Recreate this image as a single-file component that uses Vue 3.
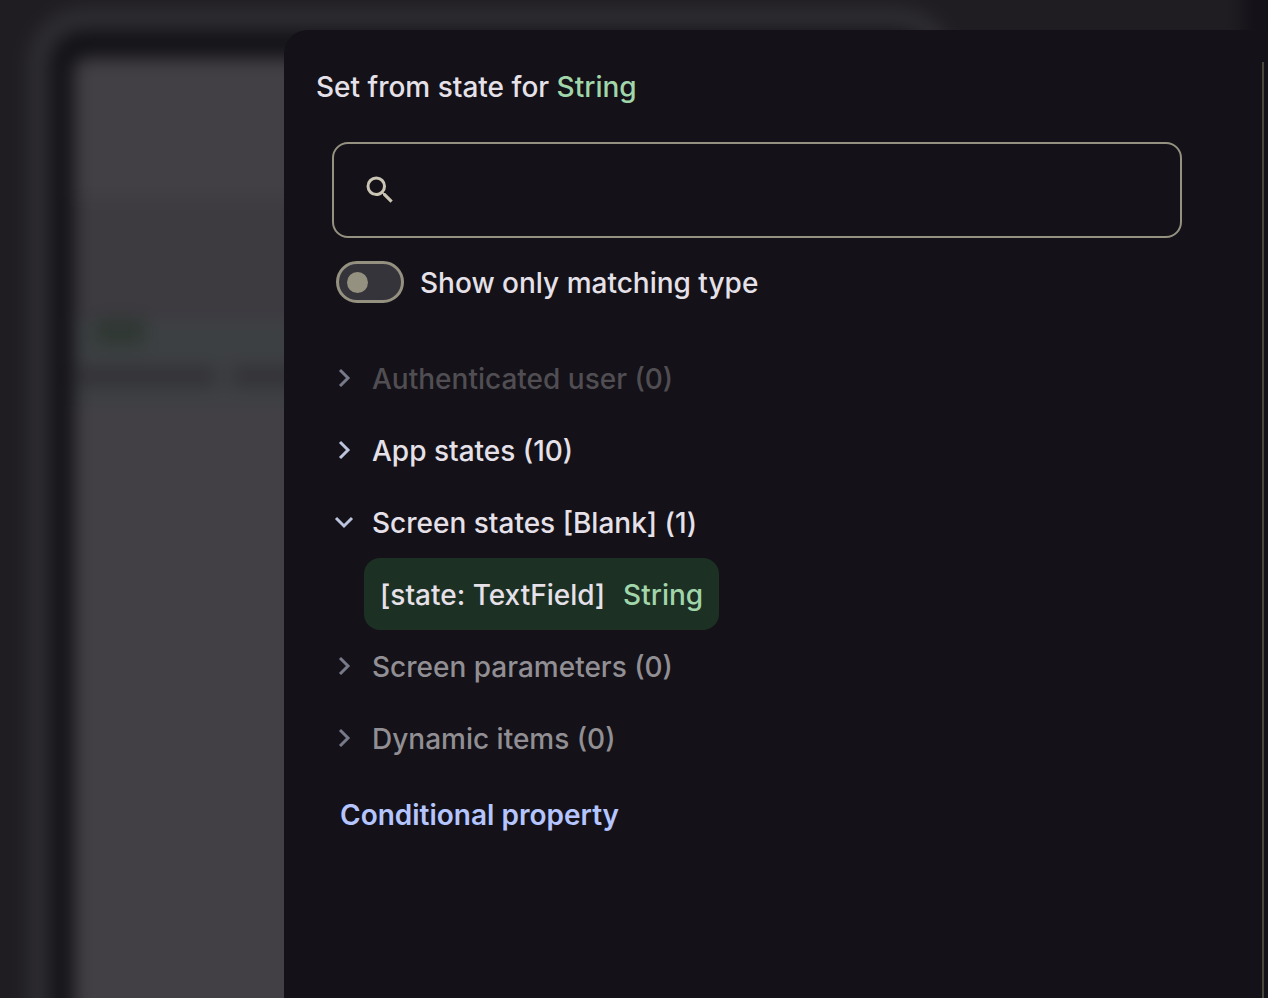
<script setup>
import { ref } from 'vue'

const query = ref('')
const matchingOnly = ref(false)

const groups = ref([
  { name: 'Authenticated user', count: 0, tone: 'faint', open: false, items: [] },
  { name: 'App states', count: 10, tone: 'normal', open: false, items: [] },
  {
    name: 'Screen states [Blank]',
    count: 1,
    tone: 'normal',
    open: true,
    items: [{ name: '[state: TextField]', type: 'String' }],
  },
  { name: 'Screen parameters', count: 0, tone: 'muted', open: false, items: [] },
  { name: 'Dynamic items', count: 0, tone: 'muted', open: false, items: [] },
])
</script>

<template>
  <div class="page">
    <div class="backdrop" aria-hidden="true">
      <div class="canvas">
        <div class="device">
          <div class="screen">
            <div class="hero"></div>
            <div class="header"></div>
            <div class="field">
              <div class="label"></div>
              <div class="words">
                <div class="word"></div>
                <div class="word"></div>
              </div>
            </div>
          </div>
        </div>
      </div>
      <div class="side"></div>
    </div>

    <main class="dialog">
      <h1 class="title">Set from state for <span class="type">String</span></h1>

      <div class="body">
        <label class="search">
          <svg class="search-icon" viewBox="0 0 24 24" aria-hidden="true">
            <path d="M15.5 14h-.79l-.28-.27A6.47 6.47 0 0 0 16 9.5 6.5 6.5 0 1 0 9.5 16c1.61 0 3.09-.59 4.23-1.57l.27.28v.79l5 4.99L20.49 19l-4.99-5zm-6 0a4.5 4.5 0 1 1 0-9 4.5 4.5 0 0 1 0 9z" />
          </svg>
          <input v-model="query" class="search-input" type="text" aria-label="Search states" />
        </label>

        <label class="match">
          <input v-model="matchingOnly" class="switch" type="checkbox" role="switch" />
          <span class="name">Show only matching type</span>
        </label>

        <ul class="groups">
          <li v-for="group in groups" :key="group.name">
            <button
              class="group"
              :class="group.tone"
              type="button"
              :aria-expanded="group.open"
              @click="group.open = !group.open"
            >
              <svg class="chevron" :class="{ open: group.open }" viewBox="0 0 24 24" aria-hidden="true">
                <path d="M8 4l8 8-8 8" />
              </svg>
              <span class="name">{{ group.name }} ({{ group.count }})</span>
            </button>
            <template v-if="group.open">
              <button v-for="item in group.items" :key="item.name" class="item" type="button">
                <span class="name">{{ item.name }}</span>
                <span class="name type">{{ item.type }}</span>
              </button>
            </template>
          </li>
        </ul>

        <button class="conditional" type="button">Conditional property</button>
      </div>
    </main>

    <aside class="rail" aria-hidden="true"></aside>
  </div>
</template>

<style>
body {
  background: #141218;
}
</style>

<style scoped>
.page {
  display: grid;
  grid-template-columns: 284px minmax(0, 1fr) 6px;
  min-height: 100vh;
  overflow: hidden;
  background: #141218;
  color: #e6e1e9;
  font-family: Inter, Roboto, sans-serif;
  font-size: 28px;
  font-weight: 500;
  line-height: 40px;
}

.backdrop {
  grid-area: 1 / 1 / 2 / 4;
  display: flex;
  margin: -40px 0 -40px -40px;
  filter: blur(9px);
}

.canvas {
  flex: 1;
  box-sizing: border-box;
  padding: 48px 288px 0 68px;
  background: #1f1d21;
}

.side {
  width: 26px;
  background: #141218;
}

.device {
  box-sizing: border-box;
  height: 100%;
  padding: 28px 24px 0;
  border: 22px solid #2e2d32;
  border-bottom: 0;
  border-radius: 56px 56px 0 0;
  background: #131217;
}

.screen {
  height: 100%;
  overflow: hidden;
  border-radius: 12px 12px 0 0;
  background: #434045;
}

.hero {
  height: 140px;
}

.header {
  height: 120px;
  background: #3d3a40;
}

.field {
  box-sizing: border-box;
  height: 88px;
  padding: 0 20px;
  background: #3d4043;
}

.label {
  width: 52px;
  height: 28px;
  background: #2f3833;
}

.words {
  display: flex;
  gap: 16px;
  margin-top: 20px;
  margin-left: -16px;
}

.word {
  width: 138px;
  height: 20px;
  background: #333237;
}

.dialog {
  grid-area: 1 / 2 / 2 / 4;
  z-index: 1;
  margin-top: 30px;
  padding: 32px 38px 32px 32px;
  border-radius: 24px 0 0 0;
  background: #141218;
}

.rail {
  grid-area: 1 / 3 / 2 / 4;
  z-index: 2;
  margin-top: 62px;
  border-left: 2px solid #48473a;
}

.title {
  margin: 0;
  padding: 5px 0 7px;
  font-size: 28px;
  font-weight: 500;
  line-height: 40px;
}

.type {
  color: #a1d6aa;
}

.body {
  padding: 28px 48px 0 16px;
}

.search {
  display: flex;
  align-items: center;
  gap: 16px;
  box-sizing: border-box;
  height: 96px;
  padding: 0 28px;
  border: 2px solid #949180;
  border-radius: 16px;
}

.search-icon {
  flex: none;
  width: 36px;
  height: 36px;
  fill: #cbc5b5;
}

.search-input {
  flex: 1;
  min-width: 0;
  padding: 0;
  border: 0;
  outline: 0;
  background: transparent;
  color: inherit;
  font: inherit;
}

.match {
  display: flex;
  align-items: center;
  gap: 16px;
  height: 48px;
  margin-top: 20px;
  padding: 0 4px;
}

.switch {
  display: flex;
  align-items: center;
  flex: none;
  appearance: none;
  box-sizing: border-box;
  width: 68px;
  height: 42px;
  margin: 0;
  padding: 0 8px;
  border: 3px solid #949180;
  border-radius: 21px;
  background: #36343b;
}

.switch::before {
  content: '';
  width: 21px;
  height: 21px;
  border-radius: 50%;
  background: #949180;
}

.switch:checked {
  justify-content: flex-end;
}

.groups {
  margin: 36px 0 0;
  padding: 0;
  list-style: none;
}

.group,
.item,
.conditional {
  display: flex;
  align-items: center;
  margin: 0;
  border: 0;
  background: none;
  color: inherit;
  font: inherit;
  text-align: left;
  cursor: pointer;
}

.name {
  padding-top: 2px;
}

.group {
  gap: 16px;
  width: 100%;
  height: 72px;
  padding: 0;
}

.chevron {
  flex: none;
  width: 24px;
  height: 24px;
  fill: none;
  stroke: #bcc3dc;
  stroke-width: 3;
}

.chevron.open {
  transform: rotate(90deg);
}

.muted .name {
  color: #918f94;
}

.faint .name {
  color: #504e53;
}

.muted .chevron,
.faint .chevron {
  stroke: #777a89;
}

.item {
  gap: 18px;
  height: 72px;
  margin-left: 32px;
  padding: 0 16px;
  border-radius: 16px;
  background: #1d3024;
}

.conditional {
  height: 72px;
  margin-top: 5px;
  padding: 0 8px;
  color: #b4c5ff;
  font-weight: 600;
}
</style>
